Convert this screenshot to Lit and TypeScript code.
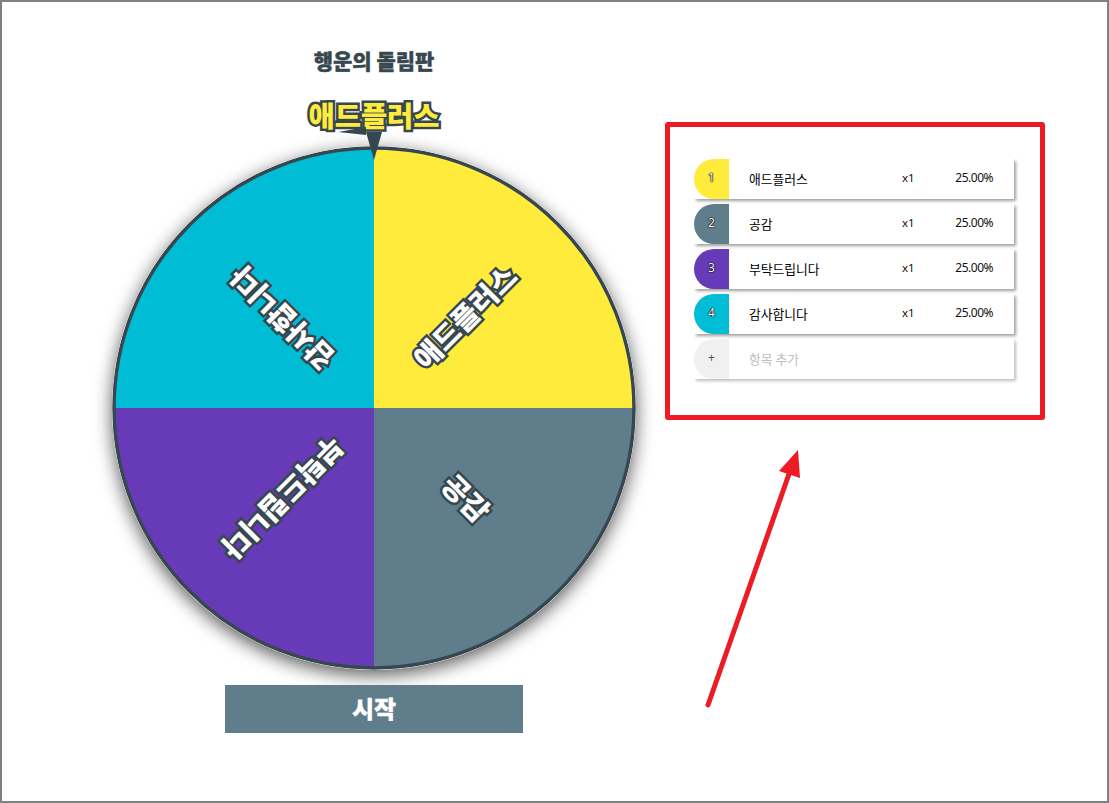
import { LitElement, html, css, svg } from "lit";
import { customElement } from "lit/decorators.js";

const ITEMS = [
  { name: "애드플러스", color: "#ffeb3b", rot: -45, x: 90, y: -92 },
  { name: "공감", color: "#607d8b", rot: 45, x: 93, y: 89 },
  { name: "부탁드립니다", color: "#673ab7", rot: 135, x: -90, y: 91 },
  { name: "감사합니다", color: "#00bcd4", rot: 225, x: -93, y: -89 },
];

const SLICES = [
  "M0 0V-260A260 260 0 0 1 260 0Z",
  "M0 0H260A260 260 0 0 1 0 260Z",
  "M0 0V260A260 260 0 0 1 -260 0Z",
  "M0 0H-260A260 260 0 0 1 0 -260Z",
];

@customElement("app-root")
export class AppRoot extends LitElement {
  static styles = css`
    :host {
      display: block;
      position: relative;
      box-sizing: border-box;
      width: 1109px;
      height: 803px;
      border: 2px solid #808080;
      background: #fff;
      overflow: hidden;
      font-family: "Noto Sans", "Noto Sans CJK KR", sans-serif;
      color: #111;
    }
    .page {
      display: flex;
      align-items: flex-start;
      padding-left: 110px;
    }
    .game {
      width: 524px;
      display: flex;
      flex-direction: column;
      align-items: center;
      position: relative;
    }
    .title {
      margin: 42px 0 0;
      height: 32px;
      line-height: 32px;
      font-size: 21px;
      font-weight: 900;
      color: #37474f;
      font-family: "Noto Sans CJK KR", sans-serif;
      -webkit-text-stroke: 0.4px #37474f;
    }
    .label {
      position: absolute;
      left: 0;
      top: 0;
      pointer-events: none;
    }
    .wheel {
      margin-top: 70px;
      width: 524px;
      height: 524px;
      border-radius: 50%;
      box-shadow: 0 5px 18px rgba(0, 0, 0, 0.65);
      display: block;
    }
    .slice-text {
      font-family: "Noto Sans CJK KR", sans-serif;
      font-weight: 900;
      font-size: 28.5px;
      fill: #fff;
      stroke: #37474f;
      stroke-width: 5px;
      stroke-linejoin: miter;
      stroke-miterlimit: 2;
      paint-order: stroke fill;
      text-anchor: middle;
      dominant-baseline: central;
    }
    .top-text {
      font-family: "Noto Sans CJK KR", sans-serif;
      font-weight: 900;
      font-size: 28.5px;
      fill: #ffeb3b;
      stroke: #37474f;
      stroke-width: 5px;
      stroke-linejoin: miter;
      stroke-miterlimit: 2;
      paint-order: stroke fill;
      text-anchor: middle;
      dominant-baseline: central;
    }
    .start {
      margin-top: 15px;
      width: 298px;
      height: 48px;
      border: 0;
      padding: 0 0 2px;
      background: #607d8b;
      color: #fff;
      font-family: "Noto Sans CJK KR", sans-serif;
      font-size: 24px;
      font-weight: 900;
      line-height: 46px;
      text-align: center;
      -webkit-text-stroke: 0.3px #fff;
    }
    .panel {
      box-sizing: border-box;
      margin: 120px 0 0 29px;
      width: 380px;
      height: 298px;
      border: 5px solid #ed1c24;
      border-radius: 3px;
      padding: 32px 24px 0;
      display: flex;
      flex-direction: column;
      gap: 5px;
    }
    .row {
      width: 320px;
      height: 40px;
      flex: none;
      display: grid;
      grid-template-columns: 35px 1fr 47px 44px 21px;
      align-items: center;
      font-size: 12px;
      background: #fff;
      box-shadow: 2px 2px 3px rgba(0, 0, 0, 0.38);
      clip-path: inset(0 -6px -6px 0);
      position: relative;
    }
    .row.add {
      box-shadow: 2px 2px 3px rgba(0, 0, 0, 0.25);
    }
    .idx {
      height: 40px;
      line-height: 37px;
      border-radius: 20px 0 0 20px;
      text-align: center;
      font-size: 12px;
      color: #fff;
      text-shadow: 0 0 1px #000, 0 0 1px #000, 0 0 1px #000, 0 0 1px #000;
    }
    .idx.plus {
      background: #f0f0f0;
      color: #555;
      text-shadow: none;
    }
    .name {
      padding: 0 0 1px 20px;
      font-family: "Noto Sans CJK KR", sans-serif;
      font-size: 12.8px;
      color: #000;
    }
    .name.hint {
      color: #bdbdbd;
    }
    .mult {
      font-size: 11.5px;
      margin-top: -3px;
    }
    .pct {
      font-size: 12px;
      letter-spacing: -0.5px;
      margin-top: -3px;
      text-align: right;
      white-space: nowrap;
    }
    .arrow {
      position: absolute;
      left: -2px;
      top: -2px;
      pointer-events: none;
    }
  `;

  render() {
    return html`
      <div class="page">
        <section class="game">
          <h1 class="title">행운의 돌림판</h1>
          <svg class="wheel" viewBox="-262 -262 524 524" width="524" height="524">
            ${SLICES.map((d, i) => svg`<path d=${d} fill=${ITEMS[i].color}></path>`)}
            <circle r="260" fill="none" stroke="#37474f" stroke-width="3.5"></circle>
            ${ITEMS.map(
              (it) => svg`<text class="slice-text" transform="translate(${it.x} ${it.y}) rotate(${it.rot})">${it.name}</text>`
            )}
          </svg>
          <svg class="label" width="524" height="170" viewBox="0 0 524 170">
            <text class="top-text" x="262" y="112">애드플러스</text>
            <path d="M226 130L254 125L254 133Z" fill="#37474f"></path>
            <path d="M254 130H270L262 158Z" fill="#37474f"></path>
          </svg>
          <button class="start">시작</button>
        </section>
        <section class="panel">
          ${ITEMS.map(
            (it, i) => html`
              <div class="row">
                <div class="idx" style="background:${it.color}">${i + 1}</div>
                <div class="name">${it.name}</div>
                <div class="mult">x1</div>
                <div class="pct">25.00%</div>
              </div>
            `
          )}
          <div class="row add">
            <div class="idx plus">+</div>
            <div class="name hint">항목 추가</div>
          </div>
        </section>
      </div>
      <svg class="arrow" width="1109" height="803" viewBox="0 0 1109 803">
        <path d="M708 705L789 474" stroke="#ed1c24" stroke-width="5" stroke-linecap="round" fill="none"></path>
        <path d="M798 450L800 478L779 471Z" fill="#ed1c24"></path>
      </svg>
    `;
  }
}
